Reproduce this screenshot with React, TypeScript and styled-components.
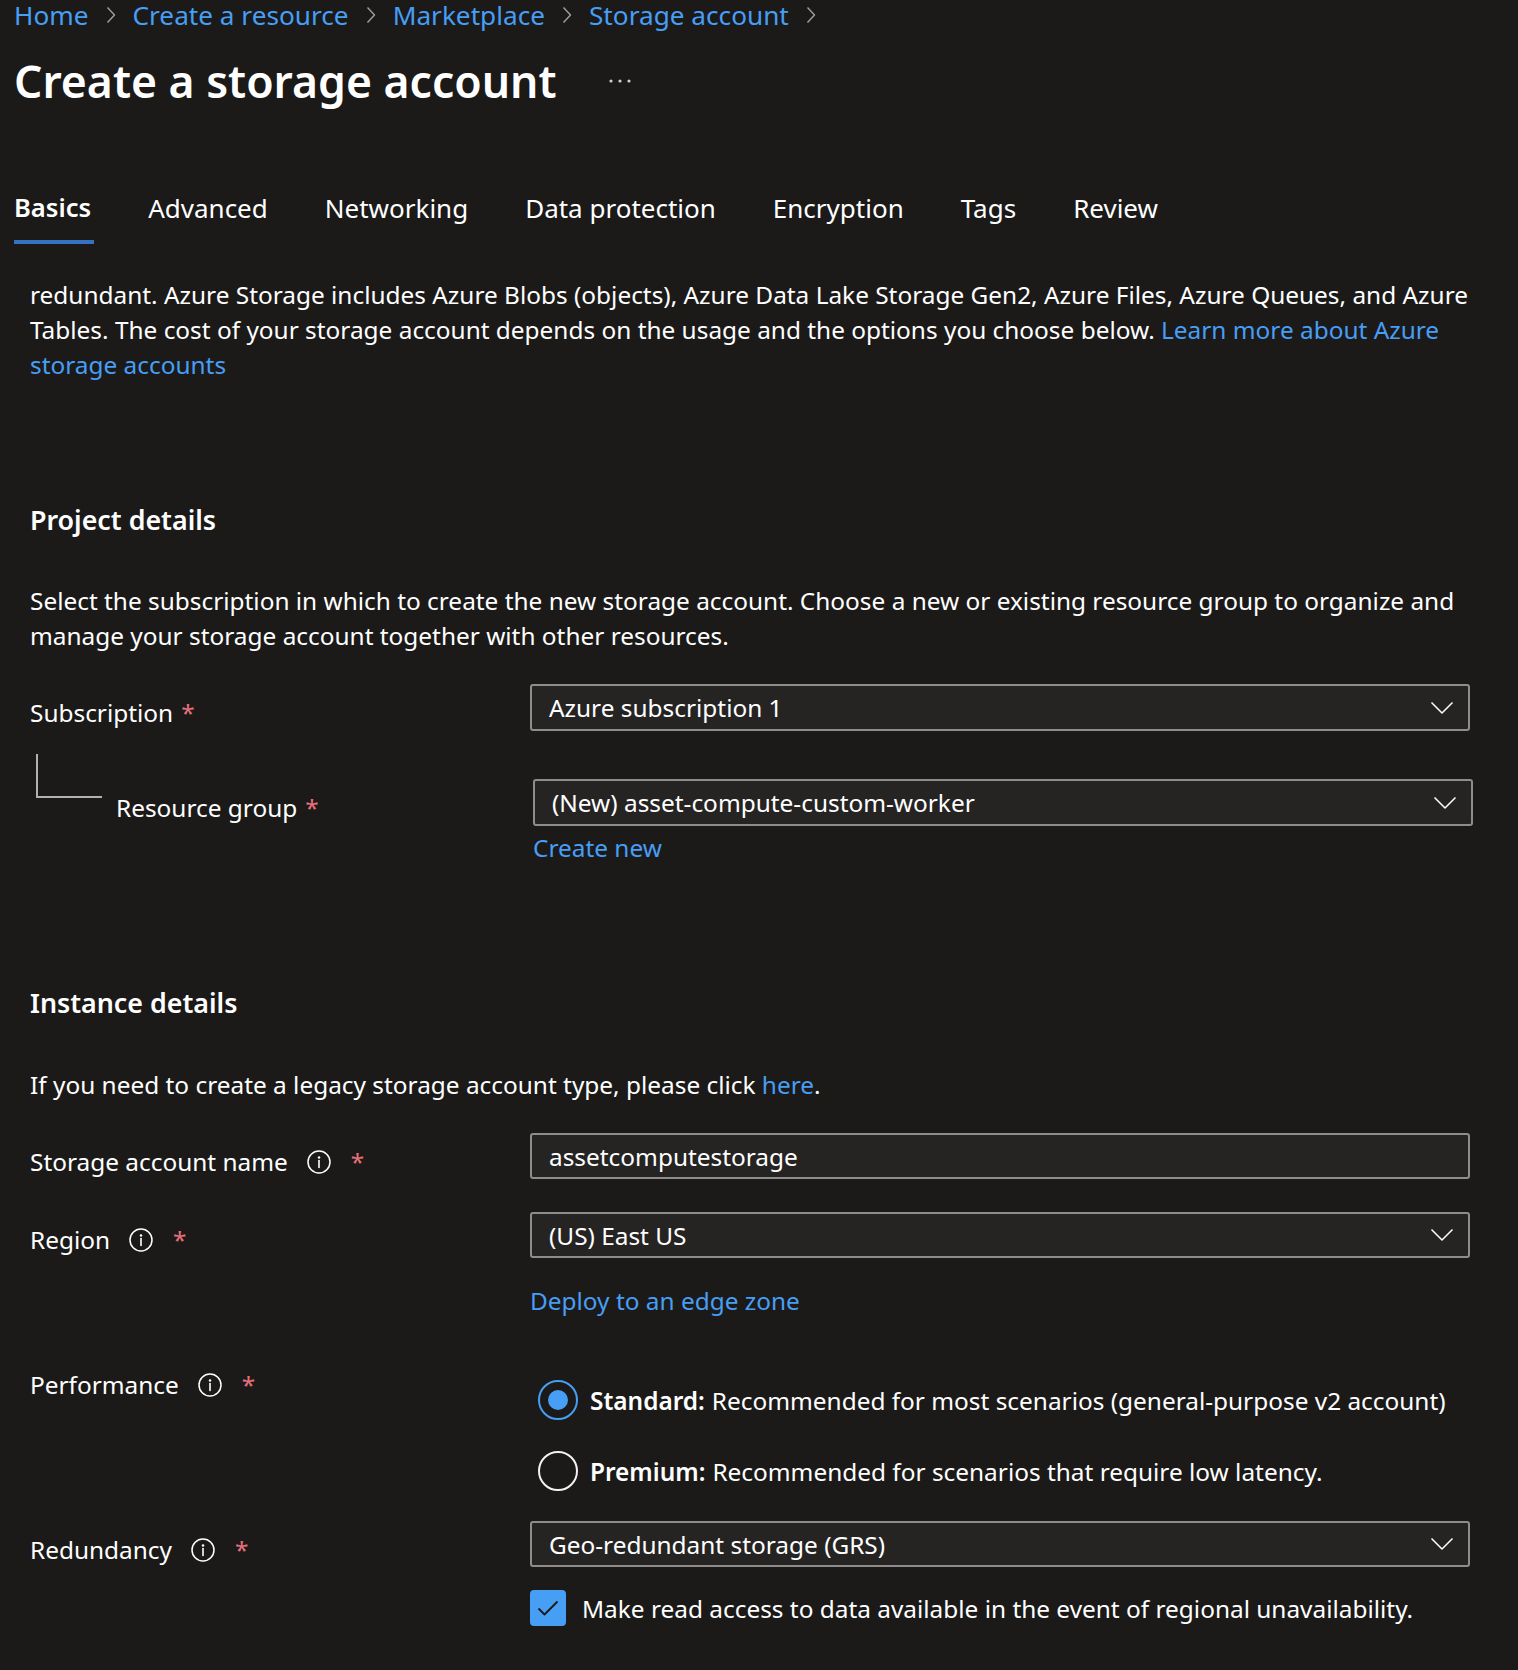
import React from "react";
import styled, { createGlobalStyle } from "styled-components";

const GlobalStyle = createGlobalStyle`
  * { box-sizing: border-box; }
  html, body { margin: 0; padding: 0; background: #1b1a19; }
  body {
    font-family: "Noto Sans", "Open Sans", sans-serif;
    color: #ffffff;
    -webkit-font-smoothing: antialiased;
  }
`;

const BODY = "24.4px";
const LINK = "#479ef5";

const Page = styled.div`
  min-height: 1670px;
  background: #1b1a19;
  overflow: hidden;
  padding-bottom: 40px;
`;

const Header = styled.header`
  padding: 0 14px;
`;

const Breadcrumb = styled.nav`
  display: flex;
  align-items: center;
  gap: 17px;
  height: 34px;
  margin-top: -2px;
  font-size: 26.2px;
  line-height: 34px;
`;

const Crumb = styled.a`
  color: ${LINK};
  text-decoration: none;
  white-space: nowrap;
`;

const CrumbChevron = styled.svg`
  width: 10px;
  height: 18px;
  flex: none;
`;

const TitleRow = styled.div`
  display: flex;
  align-items: center;
  gap: 51px;
  height: 56px;
  margin-top: 21px;
`;

const Title = styled.h1`
  margin: 0;
  font-size: 44.5px;
  font-weight: 600;
  line-height: 56px;
  color: #ffffff;
  white-space: nowrap;
`;

const MoreButton = styled.button`
  display: flex;
  align-items: center;
  background: none;
  border: 0;
  padding: 0;
  color: #d2d0ce;
  cursor: pointer;
`;

const TabList = styled.div`
  display: flex;
  gap: 57px;
  margin-top: 82px;
`;

const Tab = styled.div<{ $active?: boolean }>`
  position: relative;
  font-size: ${(p) => (p.$active ? "25.6px" : "26px")};
  line-height: 34px;
  padding-bottom: 19px;
  font-weight: ${(p) => (p.$active ? 600 : 400)};
  color: #ffffff;
  white-space: nowrap;
  &::after {
    content: "";
    position: absolute;
    left: 0;
    right: -3px;
    bottom: 0;
    height: 4px;
    background: ${(p) => (p.$active ? "#3573c2" : "transparent")};
  }
`;

const Content = styled.main`
  padding: 0 30px;
`;

const Paragraph = styled.p<{ $mt: number }>`
  margin: ${(p) => p.$mt}px 0 0;
  font-size: ${BODY};
  line-height: 35px;
  color: #ffffff;
`;

const Link = styled.a`
  color: ${LINK};
  text-decoration: none;
`;

const SectionTitle = styled.h2<{ $mt: number }>`
  margin: ${(p) => p.$mt}px 0 0;
  font-size: 26.8px;
  font-weight: 600;
  line-height: 36px;
`;

const FormRow = styled.div<{ $mt: number }>`
  display: grid;
  grid-template-columns: 500px 940px;
  align-items: start;
  margin-top: ${(p) => p.$mt}px;
`;

const LabelCell = styled.div<{ $offset: number }>`
  display: flex;
  align-items: center;
  height: 35px;
  margin-top: ${(p) => p.$offset}px;
  font-size: ${BODY};
  line-height: 35px;
  white-space: nowrap;
`;

const NestedLabel = styled.div`
  display: flex;
  align-items: flex-start;
  padding-left: 6px;
`;

const TreeConnector = styled.div`
  width: 66px;
  height: 44px;
  margin-top: -25px;
  margin-right: 14px;
  border-left: 2px solid #b3b0ad;
  border-bottom: 2px solid #b3b0ad;
  flex: none;
`;

const InfoButton = styled.span`
  display: inline-flex;
  align-items: center;
  margin: 0 12px 0 19px;
  color: #ffffff;
`;

const Required = styled.span`
  margin-left: 8px;
  color: #e5707a;
`;

const ControlCell = styled.div<{ $shift?: number }>`
  display: flex;
  flex-direction: column;
  align-items: flex-start;
  margin-left: ${(p) => p.$shift ?? 0}px;
`;

const Field = styled.div<{ $h: number }>`
  display: flex;
  align-items: center;
  justify-content: space-between;
  width: 940px;
  height: ${(p) => p.$h}px;
  padding: 0 14px 0 17px;
  background: #252423;
  border: 2px solid #8f8d8b;
  border-radius: 3px;
  font-size: ${BODY};
  color: #ffffff;
  white-space: nowrap;
`;

const FieldLink = styled(Link)<{ $mt: number }>`
  display: block;
  margin-top: ${(p) => p.$mt}px;
  font-size: ${BODY};
  line-height: 35px;
`;

const RadioGroup = styled.div`
  display: flex;
  flex-direction: column;
  gap: 31px;
  padding: 13px 0 0 8px;
`;

const RadioOption = styled.label`
  display: flex;
  align-items: center;
  gap: 12px;
  height: 40px;
  font-size: ${BODY};
  white-space: nowrap;
`;

const RadioCircle = styled.span<{ $checked?: boolean }>`
  display: grid;
  place-items: center;
  width: 40px;
  height: 40px;
  border-radius: 50%;
  border: 2px solid ${(p) => (p.$checked ? LINK : "#f3f2f1")};
  flex: none;
  &::before {
    content: "";
    width: 20px;
    height: 20px;
    border-radius: 50%;
    background: ${(p) => (p.$checked ? LINK : "transparent")};
  }
`;

const OptionTitle = styled.strong`
  font-weight: 600;
  margin-right: 7px;
`;

const CheckRow = styled.label`
  display: flex;
  align-items: center;
  gap: 16px;
  margin-top: 23px;
  font-size: ${BODY};
  white-space: nowrap;
`;

const CheckBox = styled.span`
  display: grid;
  place-items: center;
  width: 36px;
  height: 36px;
  border-radius: 4px;
  background: ${LINK};
  flex: none;
`;

const Chevron = () => (
  <svg width="24" height="14" viewBox="0 0 24 14" fill="none">
    <path d="M1.5 1.5 L12 12 L22.5 1.5" stroke="#ffffff" strokeWidth="1.5" strokeLinejoin="round" />
  </svg>
);

const InfoIcon = () => (
  <InfoButton>
    <svg width="24" height="24" viewBox="0 0 24 24" fill="none">
      <circle cx="12" cy="12" r="11" stroke="#ffffff" strokeWidth="1.5" />
      <circle cx="12" cy="7.4" r="1.25" fill="#ffffff" />
      <path d="M12 10.6 V17.4" stroke="#ffffff" strokeWidth="1.6" strokeLinecap="round" />
    </svg>
  </InfoButton>
);

const Sep = () => (
  <CrumbChevron viewBox="0 0 10 18" fill="none">
    <path d="M1.5 1.5 L8.5 9 L1.5 16.5" stroke="#a19f9d" strokeWidth="1.4" strokeLinejoin="round" />
  </CrumbChevron>
);

const tabs = ["Basics", "Advanced", "Networking", "Data protection", "Encryption", "Tags", "Review"];
const crumbs = ["Home", "Create a resource", "Marketplace", "Storage account"];

export default function App() {
  return (
    <>
      <GlobalStyle />
      <Page>
        <Header>
          <Breadcrumb>
            {crumbs.map((c) => (
              <React.Fragment key={c}>
                <Crumb href="#">{c}</Crumb>
                <Sep />
              </React.Fragment>
            ))}
          </Breadcrumb>
          <TitleRow>
            <Title>Create a storage account</Title>
            <MoreButton aria-label="More">
              <svg width="24" height="6" viewBox="0 0 24 6">
                <circle cx="3" cy="3" r="1.6" fill="currentColor" />
                <circle cx="12" cy="3" r="1.6" fill="currentColor" />
                <circle cx="21" cy="3" r="1.6" fill="currentColor" />
              </svg>
            </MoreButton>
          </TitleRow>
          <TabList>
            {tabs.map((t, i) => (
              <Tab key={t} $active={i === 0}>
                {t}
              </Tab>
            ))}
          </TabList>
        </Header>

        <Content>
          <Paragraph $mt={33}>
            redundant. Azure Storage includes Azure Blobs (objects), Azure Data Lake Storage Gen2, Azure Files, Azure
            Queues, and Azure Tables. The cost of your storage account depends on the usage and the options you choose
            below. <Link href="#">Learn more about Azure storage accounts</Link>
          </Paragraph>

          <SectionTitle $mt={120}>Project details</SectionTitle>
          <Paragraph $mt={45}>
            Select the subscription in which to create the new storage account. Choose a new or existing resource group
            to organize and manage your storage account together with other resources.
          </Paragraph>

          <FormRow $mt={31}>
            <LabelCell $offset={11}>
              Subscription<Required>*</Required>
            </LabelCell>
            <ControlCell>
              <Field $h={47}>
                Azure subscription 1
                <Chevron />
              </Field>
            </ControlCell>
          </FormRow>

          <FormRow $mt={48}>
            <NestedLabel>
              <TreeConnector />
              <LabelCell $offset={11}>
                Resource group<Required>*</Required>
              </LabelCell>
            </NestedLabel>
            <ControlCell $shift={3}>
              <Field $h={47}>
                (New) asset-compute-custom-worker
                <Chevron />
              </Field>
              <FieldLink href="#" $mt={4}>
                Create new
              </FieldLink>
            </ControlCell>
          </FormRow>

          <SectionTitle $mt={120}>Instance details</SectionTitle>
          <Paragraph $mt={46}>
            If you need to create a legacy storage account type, please click <Link href="#">here</Link>.
          </Paragraph>

          <FormRow $mt={31}>
            <LabelCell $offset={11}>
              Storage account name
              <InfoIcon />
              <Required>*</Required>
            </LabelCell>
            <ControlCell>
              <Field $h={46}>assetcomputestorage</Field>
            </ControlCell>
          </FormRow>

          <FormRow $mt={33}>
            <LabelCell $offset={10}>
              Region
              <InfoIcon />
              <Required>*</Required>
            </LabelCell>
            <ControlCell>
              <Field $h={46}>
                (US) East US
                <Chevron />
              </Field>
              <FieldLink href="#" $mt={25}>
                Deploy to an edge zone
              </FieldLink>
            </ControlCell>
          </FormRow>

          <FormRow $mt={49}>
            <LabelCell $offset={0}>
              Performance
              <InfoIcon />
              <Required>*</Required>
            </LabelCell>
            <RadioGroup>
              <RadioOption>
                <RadioCircle $checked />
                <span>
                  <OptionTitle>Standard:</OptionTitle>Recommended for most scenarios (general-purpose v2 account)
                </span>
              </RadioOption>
              <RadioOption>
                <RadioCircle />
                <span>
                  <OptionTitle>Premium:</OptionTitle>Recommended for scenarios that require low latency.
                </span>
              </RadioOption>
            </RadioGroup>
          </FormRow>

          <FormRow $mt={30}>
            <LabelCell $offset={11}>
              Redundancy
              <InfoIcon />
              <Required>*</Required>
            </LabelCell>
            <ControlCell>
              <Field $h={46}>
                Geo-redundant storage (GRS)
                <Chevron />
              </Field>
              <CheckRow>
                <CheckBox>
                  <svg width="22" height="16" viewBox="0 0 22 16" fill="none">
                    <path d="M1.5 8.5 L7.5 14.5 L20.5 1.5" stroke="#1b1a19" strokeWidth="1.8" strokeLinejoin="round" />
                  </svg>
                </CheckBox>
                Make read access to data available in the event of regional unavailability.
              </CheckRow>
            </ControlCell>
          </FormRow>
        </Content>
      </Page>
    </>
  );
}
